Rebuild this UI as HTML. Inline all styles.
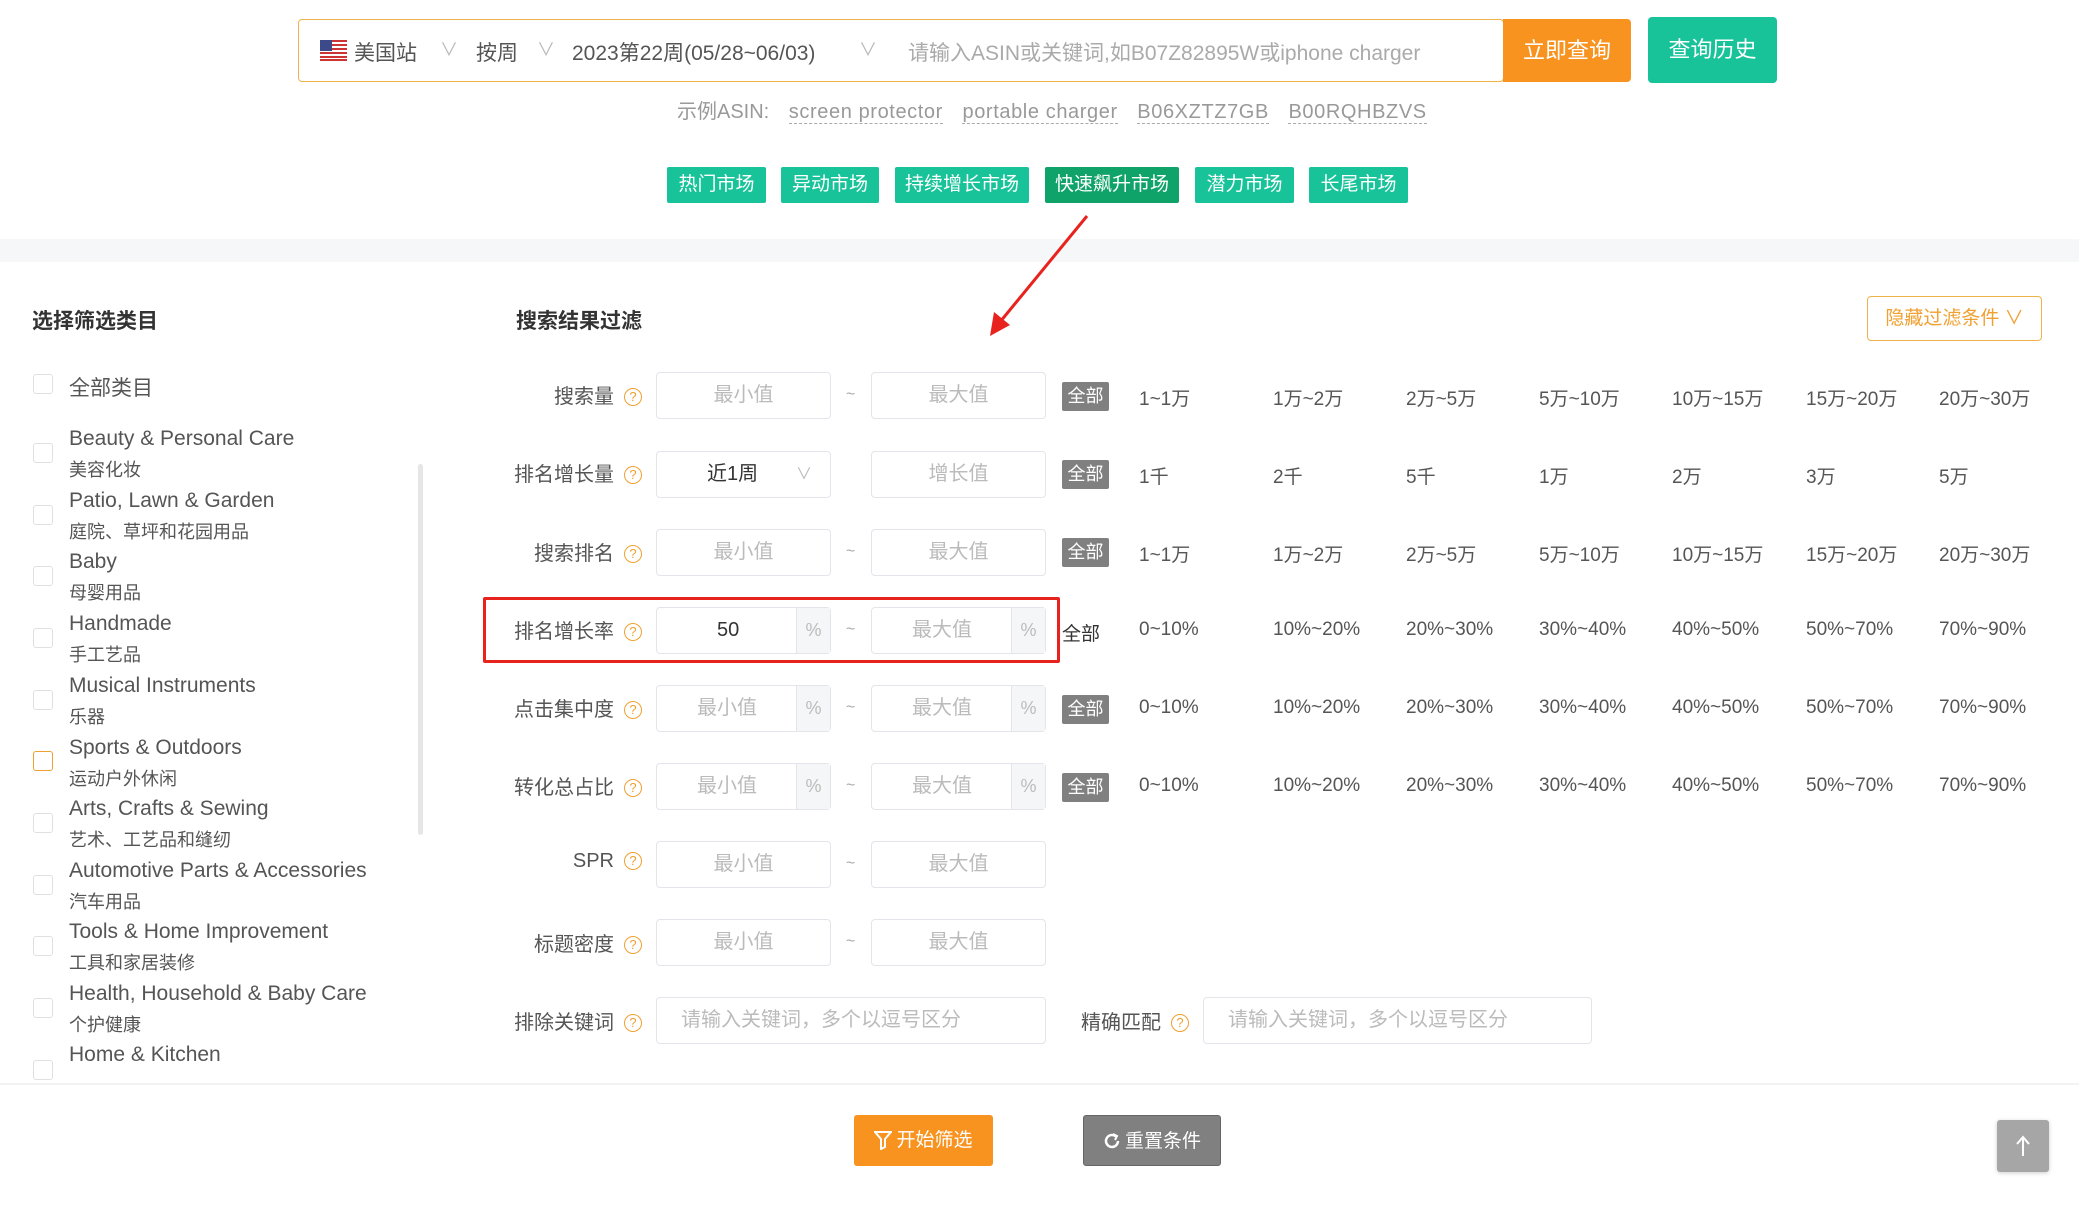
<!DOCTYPE html>
<html><head><meta charset="utf-8"><style>
*{margin:0;padding:0;box-sizing:border-box}
body{width:2079px;height:1210px;position:relative;background:#fff;font-family:"Liberation Sans","Noto Sans CJK SC",sans-serif;color:#333;overflow:hidden}
.a{position:absolute;white-space:nowrap}
.inp{position:absolute;border:1px solid #e3e5ea;border-radius:4px;background:#fff;color:#bbb;font-size:20px;text-align:center;height:47px;line-height:45px}
.pct{position:absolute;right:0;top:0;width:34px;height:45px;background:#f5f6f8;border-left:1px solid #e3e5ea;color:#bbb;font-size:18px;text-align:center}
.lbl{position:absolute;font-size:20px;color:#555;text-align:right;width:210px}
.q{display:inline-block;width:18px;height:18px;border:1.5px solid #f0a030;border-radius:50%;color:#f0a030;font-size:13px;line-height:15px;text-align:center;margin-left:10px;vertical-align:2px}
.all{position:absolute;left:1062px;width:47px;height:29px;background:#808080;color:#fff;font-size:18px;line-height:29px;text-align:center;border-radius:2px}
.opt{position:absolute;font-size:19px;color:#555}
.cb{position:absolute;left:33px;width:20px;height:20px;border:1px solid #e0e0e0;border-radius:3px}
.cn{position:absolute;left:69px;font-size:21px;color:#555}
.cs{position:absolute;left:69px;font-size:18px;color:#555}
.mk{position:absolute;top:167px;height:36px;background:#19c39a;color:#fff;font-size:19px;line-height:36px;text-align:center;border-radius:2px}
.tl{position:absolute;font-size:16px;color:#aaa}
.ex{border-bottom:1px dashed #aaa;margin-left:14px;letter-spacing:0.6px}
</style></head><body>
<div class="a" style="left:298px;top:19px;width:1206px;height:63px;border:1px solid #f0b24a;border-radius:4px"></div>
<svg class="a" style="left:320px;top:40px" width="27" height="21"><rect width="27" height="21" fill="#fff"/><g fill="#c33"><rect y="0" width="27" height="2"/><rect y="4" width="27" height="2"/><rect y="8" width="27" height="2"/><rect y="12" width="27" height="2"/><rect y="16" width="27" height="2"/><rect y="19" width="27" height="2"/></g><rect width="12" height="11" fill="#3c4a8a"/></svg>
<div class="a" style="left:354px;top:37px;font-size:21px;color:#555">美国站</div>
<div class="a" style="left:440px;top:36px;font-size:18px;color:#bbb">∨</div>
<div class="a" style="left:476px;top:37px;font-size:21px;color:#555">按周</div>
<div class="a" style="left:537px;top:36px;font-size:18px;color:#bbb">∨</div>
<div class="a" style="left:572px;top:37px;font-size:21px;color:#555">2023第22周(05/28~06/03)</div>
<div class="a" style="left:859px;top:36px;font-size:18px;color:#bbb">∨</div>
<div class="a" style="left:908px;top:37px;font-size:21px;color:#aaa">请输入ASIN或关键词,如B07Z82895W或iphone charger</div>
<div class="a" style="left:1503px;top:19px;width:128px;height:63px;background:#f7931e;color:#fff;font-size:22px;line-height:63px;text-align:center;border-radius:0 4px 4px 0">立即查询</div>
<div class="a" style="left:1648px;top:17px;width:129px;height:66px;background:#19c39a;color:#fff;font-size:22px;line-height:66px;text-align:center;border-radius:4px">查询历史</div>
<div class="a" style="left:677px;top:95px;font-size:20px;color:#999">示例ASIN: <span class="ex">screen protector</span> <span class="ex">portable charger</span> <span class="ex">B06XZTZ7GB</span> <span class="ex">B00RQHBZVS</span></div>
<div class="mk" style="left:667px;width:99px">热门市场</div>
<div class="mk" style="left:781px;width:98px">异动市场</div>
<div class="mk" style="left:895px;width:134px">持续增长市场</div>
<div class="mk" style="left:1045px;width:134px;background:#0fa36a">快速飙升市场</div>
<div class="mk" style="left:1195px;width:99px">潜力市场</div>
<div class="mk" style="left:1309px;width:99px">长尾市场</div>
<div class="a" style="left:0;top:239px;width:2079px;height:23px;background:#f6f7f9"></div>
<svg class="a" style="left:0;top:0" width="2079" height="400"><line x1="1087" y1="216" x2="1000" y2="322" stroke="#e8231e" stroke-width="3"/><polygon points="990,336 994,312 1010,325" fill="#e8231e"/></svg>
<div class="a" style="left:32px;top:305px;font-size:21px;font-weight:bold;color:#333">选择筛选类目</div>
<div class="a" style="left:516px;top:305px;font-size:21px;font-weight:bold;color:#333">搜索结果过滤</div>
<div class="a" style="left:1867px;top:296px;width:175px;height:45px;border:1px solid #f0b24a;border-radius:4px;color:#f0a030;font-size:19px;line-height:43px;text-align:center">隐藏过滤条件 ∨</div>
<div class="cb" style="top:374px"></div><div class="cn" style="top:372px">全部类目</div>
<div class="cb" style="top:443px"></div><div class="cn" style="top:427px">Beauty &amp; Personal Care</div><div class="cs" style="top:456px">美容化妆</div>
<div class="cb" style="top:505px"></div><div class="cn" style="top:489px">Patio, Lawn &amp; Garden</div><div class="cs" style="top:518px">庭院、草坪和花园用品</div>
<div class="cb" style="top:566px"></div><div class="cn" style="top:550px">Baby</div><div class="cs" style="top:579px">母婴用品</div>
<div class="cb" style="top:628px"></div><div class="cn" style="top:612px">Handmade</div><div class="cs" style="top:641px">手工艺品</div>
<div class="cb" style="top:690px"></div><div class="cn" style="top:674px">Musical Instruments</div><div class="cs" style="top:703px">乐器</div>
<div class="cb" style="top:751px;border-color:#f0a030"></div><div class="cn" style="top:736px">Sports &amp; Outdoors</div><div class="cs" style="top:765px">运动户外休闲</div>
<div class="cb" style="top:813px"></div><div class="cn" style="top:797px">Arts, Crafts &amp; Sewing</div><div class="cs" style="top:826px">艺术、工艺品和缝纫</div>
<div class="cb" style="top:875px"></div><div class="cn" style="top:859px">Automotive Parts &amp; Accessories</div><div class="cs" style="top:888px">汽车用品</div>
<div class="cb" style="top:936px"></div><div class="cn" style="top:920px">Tools &amp; Home Improvement</div><div class="cs" style="top:949px">工具和家居装修</div>
<div class="cb" style="top:998px"></div><div class="cn" style="top:982px">Health, Household &amp; Baby Care</div><div class="cs" style="top:1011px">个护健康</div>
<div class="cb" style="top:1060px"></div><div class="cn" style="top:1043px">Home &amp; Kitchen</div>
<div class="a" style="left:418px;top:464px;width:5px;height:371px;background:#e6e6e6;border-radius:3px"></div>

<div class="lbl" style="left:432px;top:380px">搜索量<span class="q">?</span></div>
<div class="inp" style="left:656px;top:372px;width:175px">最小值</div><div class="tl" style="left:846px;top:386px">~</div><div class="inp" style="left:871px;top:372px;width:175px">最大值</div>
<div class="all" style="top:382px">全部</div>

<div class="lbl" style="left:432px;top:458px">排名增长量<span class="q">?</span></div>
<div class="inp" style="left:656px;top:451px;width:175px;color:#333;text-align:left;padding-left:50px">近1周<span style="position:absolute;right:18px;color:#bbb;font-size:16px">∨</span></div><div class="inp" style="left:871px;top:451px;width:175px">增长值</div>
<div class="all" style="top:460px">全部</div>

<div class="lbl" style="left:432px;top:537px">搜索排名<span class="q">?</span></div>
<div class="inp" style="left:656px;top:529px;width:175px">最小值</div><div class="tl" style="left:846px;top:543px">~</div><div class="inp" style="left:871px;top:529px;width:175px">最大值</div>
<div class="all" style="top:538px">全部</div>

<div class="a" style="left:483px;top:597px;width:577px;height:66px;border:3px solid #e8231e;border-radius:2px"></div>
<div class="lbl" style="left:432px;top:615px">排名增长率<span class="q">?</span></div>
<div class="inp" style="left:656px;top:607px;width:175px;color:#333;text-align:left;padding-left:60px">50<div class="pct">%</div></div><div class="tl" style="left:846px;top:621px">~</div><div class="inp" style="left:871px;top:607px;width:175px;text-align:left;padding-left:40px">最大值<div class="pct">%</div></div>
<div class="a" style="left:1062px;top:619px;font-size:19px;color:#333">全部</div>

<div class="lbl" style="left:432px;top:693px">点击集中度<span class="q">?</span></div>
<div class="inp" style="left:656px;top:685px;width:175px;text-align:left;padding-left:40px">最小值<div class="pct">%</div></div><div class="tl" style="left:846px;top:699px">~</div><div class="inp" style="left:871px;top:685px;width:175px;text-align:left;padding-left:40px">最大值<div class="pct">%</div></div>
<div class="all" style="top:695px">全部</div>

<div class="lbl" style="left:432px;top:771px">转化总占比<span class="q">?</span></div>
<div class="inp" style="left:656px;top:763px;width:175px;text-align:left;padding-left:40px">最小值<div class="pct">%</div></div><div class="tl" style="left:846px;top:777px">~</div><div class="inp" style="left:871px;top:763px;width:175px;text-align:left;padding-left:40px">最大值<div class="pct">%</div></div>
<div class="all" style="top:773px">全部</div>

<div class="lbl" style="left:432px;top:850px">SPR<span class="q">?</span></div>
<div class="inp" style="left:656px;top:841px;width:175px">最小值</div><div class="tl" style="left:846px;top:855px">~</div><div class="inp" style="left:871px;top:841px;width:175px">最大值</div>

<div class="lbl" style="left:432px;top:928px">标题密度<span class="q">?</span></div>
<div class="inp" style="left:656px;top:919px;width:175px">最小值</div><div class="tl" style="left:846px;top:933px">~</div><div class="inp" style="left:871px;top:919px;width:175px">最大值</div>

<div class="lbl" style="left:432px;top:1006px">排除关键词<span class="q">?</span></div>
<div class="inp" style="left:656px;top:997px;width:390px;text-align:left;padding-left:24px">请输入关键词，多个以逗号区分</div>
<div class="a" style="left:1081px;top:1006px;font-size:20px;color:#555">精确匹配<span class="q">?</span></div>
<div class="inp" style="left:1203px;top:997px;width:389px;text-align:left;padding-left:24px">请输入关键词，多个以逗号区分</div>

<div class="opt" style="top:384px;left:1139px">1~1万</div><div class="opt" style="top:384px;left:1273px">1万~2万</div><div class="opt" style="top:384px;left:1406px">2万~5万</div><div class="opt" style="top:384px;left:1539px">5万~10万</div><div class="opt" style="top:384px;left:1672px">10万~15万</div><div class="opt" style="top:384px;left:1806px">15万~20万</div><div class="opt" style="top:384px;left:1939px">20万~30万</div>
<div class="opt" style="top:462px;left:1139px">1千</div><div class="opt" style="top:462px;left:1273px">2千</div><div class="opt" style="top:462px;left:1406px">5千</div><div class="opt" style="top:462px;left:1539px">1万</div><div class="opt" style="top:462px;left:1672px">2万</div><div class="opt" style="top:462px;left:1806px">3万</div><div class="opt" style="top:462px;left:1939px">5万</div>
<div class="opt" style="top:540px;left:1139px">1~1万</div><div class="opt" style="top:540px;left:1273px">1万~2万</div><div class="opt" style="top:540px;left:1406px">2万~5万</div><div class="opt" style="top:540px;left:1539px">5万~10万</div><div class="opt" style="top:540px;left:1672px">10万~15万</div><div class="opt" style="top:540px;left:1806px">15万~20万</div><div class="opt" style="top:540px;left:1939px">20万~30万</div>
<div class="opt" style="top:619px;left:1139px">0~10%</div><div class="opt" style="top:619px;left:1273px">10%~20%</div><div class="opt" style="top:619px;left:1406px">20%~30%</div><div class="opt" style="top:619px;left:1539px">30%~40%</div><div class="opt" style="top:619px;left:1672px">40%~50%</div><div class="opt" style="top:619px;left:1806px">50%~70%</div><div class="opt" style="top:619px;left:1939px">70%~90%</div>
<div class="opt" style="top:697px;left:1139px">0~10%</div><div class="opt" style="top:697px;left:1273px">10%~20%</div><div class="opt" style="top:697px;left:1406px">20%~30%</div><div class="opt" style="top:697px;left:1539px">30%~40%</div><div class="opt" style="top:697px;left:1672px">40%~50%</div><div class="opt" style="top:697px;left:1806px">50%~70%</div><div class="opt" style="top:697px;left:1939px">70%~90%</div>
<div class="opt" style="top:775px;left:1139px">0~10%</div><div class="opt" style="top:775px;left:1273px">10%~20%</div><div class="opt" style="top:775px;left:1406px">20%~30%</div><div class="opt" style="top:775px;left:1539px">30%~40%</div><div class="opt" style="top:775px;left:1672px">40%~50%</div><div class="opt" style="top:775px;left:1806px">50%~70%</div><div class="opt" style="top:775px;left:1939px">70%~90%</div>

<div class="a" style="left:0;top:1083px;width:2079px;height:127px;background:#fff;border-top:2px solid #f2f3f5"></div>
<div class="a" style="left:854px;top:1115px;width:139px;height:51px;background:#f7931e;color:#fff;font-size:19px;line-height:51px;text-align:center;border-radius:3px">
<svg width="18" height="20" style="vertical-align:-4px;margin-right:4px" viewBox="0 0 18 20"><path d="M1 2h16l-6 7v8l-4 2V9z" fill="none" stroke="#fff" stroke-width="2"/></svg>开始筛选</div>
<div class="a" style="left:1083px;top:1115px;width:138px;height:51px;background:#808080;color:#fff;font-size:19px;line-height:51px;text-align:center;border-radius:3px;border:1px solid #666">
<svg width="18" height="18" style="vertical-align:-3px;margin-right:4px" viewBox="0 0 18 18"><path d="M15 9a6 6 0 1 1-2-4.5" fill="none" stroke="#fff" stroke-width="2.5"/><path d="M10 2l4 2-2 4" fill="none" stroke="#fff" stroke-width="2"/></svg>重置条件</div>
<div class="a" style="left:1997px;top:1120px;width:52px;height:52px;background:#a6a6a6;border-radius:3px;box-shadow:0 1px 4px rgba(0,0,0,.2)"><svg width="52" height="52"><path d="M26 36V18M20 24l6-7 6 7" fill="none" stroke="#fff" stroke-width="2"/></svg></div>
</body></html>
